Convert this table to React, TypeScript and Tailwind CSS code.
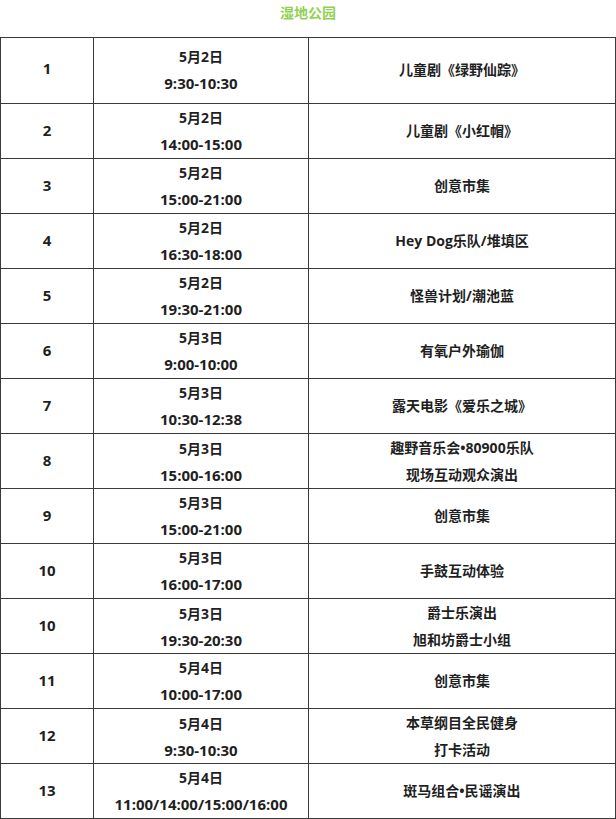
import * as React from "react";

type Row = {
  no: string;
  date: string;
  time: string;
  event: string[];
};

const rows: Row[] = [
  { no: "1", date: "5月2日", time: "9:30-10:30", event: ["儿童剧《绿野仙踪》"] },
  { no: "2", date: "5月2日", time: "14:00-15:00", event: ["儿童剧《小红帽》"] },
  { no: "3", date: "5月2日", time: "15:00-21:00", event: ["创意市集"] },
  { no: "4", date: "5月2日", time: "16:30-18:00", event: ["Hey Dog乐队/堆填区"] },
  { no: "5", date: "5月2日", time: "19:30-21:00", event: ["怪兽计划/潮池蓝"] },
  { no: "6", date: "5月3日", time: "9:00-10:00", event: ["有氧户外瑜伽"] },
  { no: "7", date: "5月3日", time: "10:30-12:38", event: ["露天电影《爱乐之城》"] },
  { no: "8", date: "5月3日", time: "15:00-16:00", event: ["趣野音乐会•80900乐队", "现场互动观众演出"] },
  { no: "9", date: "5月3日", time: "15:00-21:00", event: ["创意市集"] },
  { no: "10", date: "5月3日", time: "16:00-17:00", event: ["手鼓互动体验"] },
  { no: "10", date: "5月3日", time: "19:30-20:30", event: ["爵士乐演出", "旭和坊爵士小组"] },
  { no: "11", date: "5月4日", time: "10:00-17:00", event: ["创意市集"] },
  { no: "12", date: "5月4日", time: "9:30-10:30", event: ["本草纲目全民健身", "打卡活动"] },
  { no: "13", date: "5月4日", time: "11:00/14:00/15:00/16:00", event: ["斑马组合•民谣演出"] },
];

export default function App() {
  return (
    <div
      className="w-[616px] bg-white text-[14px] font-bold text-[#1f1f1f]"
      style={{ fontFamily: '"Open Sans", "Noto Sans CJK SC", sans-serif' }}
    >
      {/* Title */}
      <div className="h-[37px] pt-[3px] text-center leading-[20px] text-[#92d050]">湿地公园</div>

      {/* Schedule table */}
      <div className="border-t border-l border-[#3a3a3a]">
        {rows.map((row, index) => (
          <div
            key={index}
            className={
              index === 0
                ? "grid h-[66px] grid-cols-[93px_215px_307px] border-b border-[#3a3a3a]"
                : "grid h-[55px] grid-cols-[93px_215px_307px] border-b border-[#3a3a3a]"
            }
          >
            <div className="flex items-center justify-center border-r border-[#3a3a3a] pb-[4px] text-[15px] leading-[27px]">
              {row.no}
            </div>
            <div className="flex flex-col items-center justify-center border-r border-[#3a3a3a] leading-[27px]">
              <div className="mb-[2px] flex flex-col items-center">
                <span>{row.date}</span>
                <span className="text-[15px]">{row.time}</span>
              </div>
            </div>
            <div className="flex flex-col items-center justify-center border-r border-[#3a3a3a] leading-[27px]">
              <div className="mb-[3px] flex flex-col items-center">
                {row.event.map((line, i) => (
                  <span key={i}>{line}</span>
                ))}
              </div>
            </div>
          </div>
        ))}
      </div>
    </div>
  );
}
